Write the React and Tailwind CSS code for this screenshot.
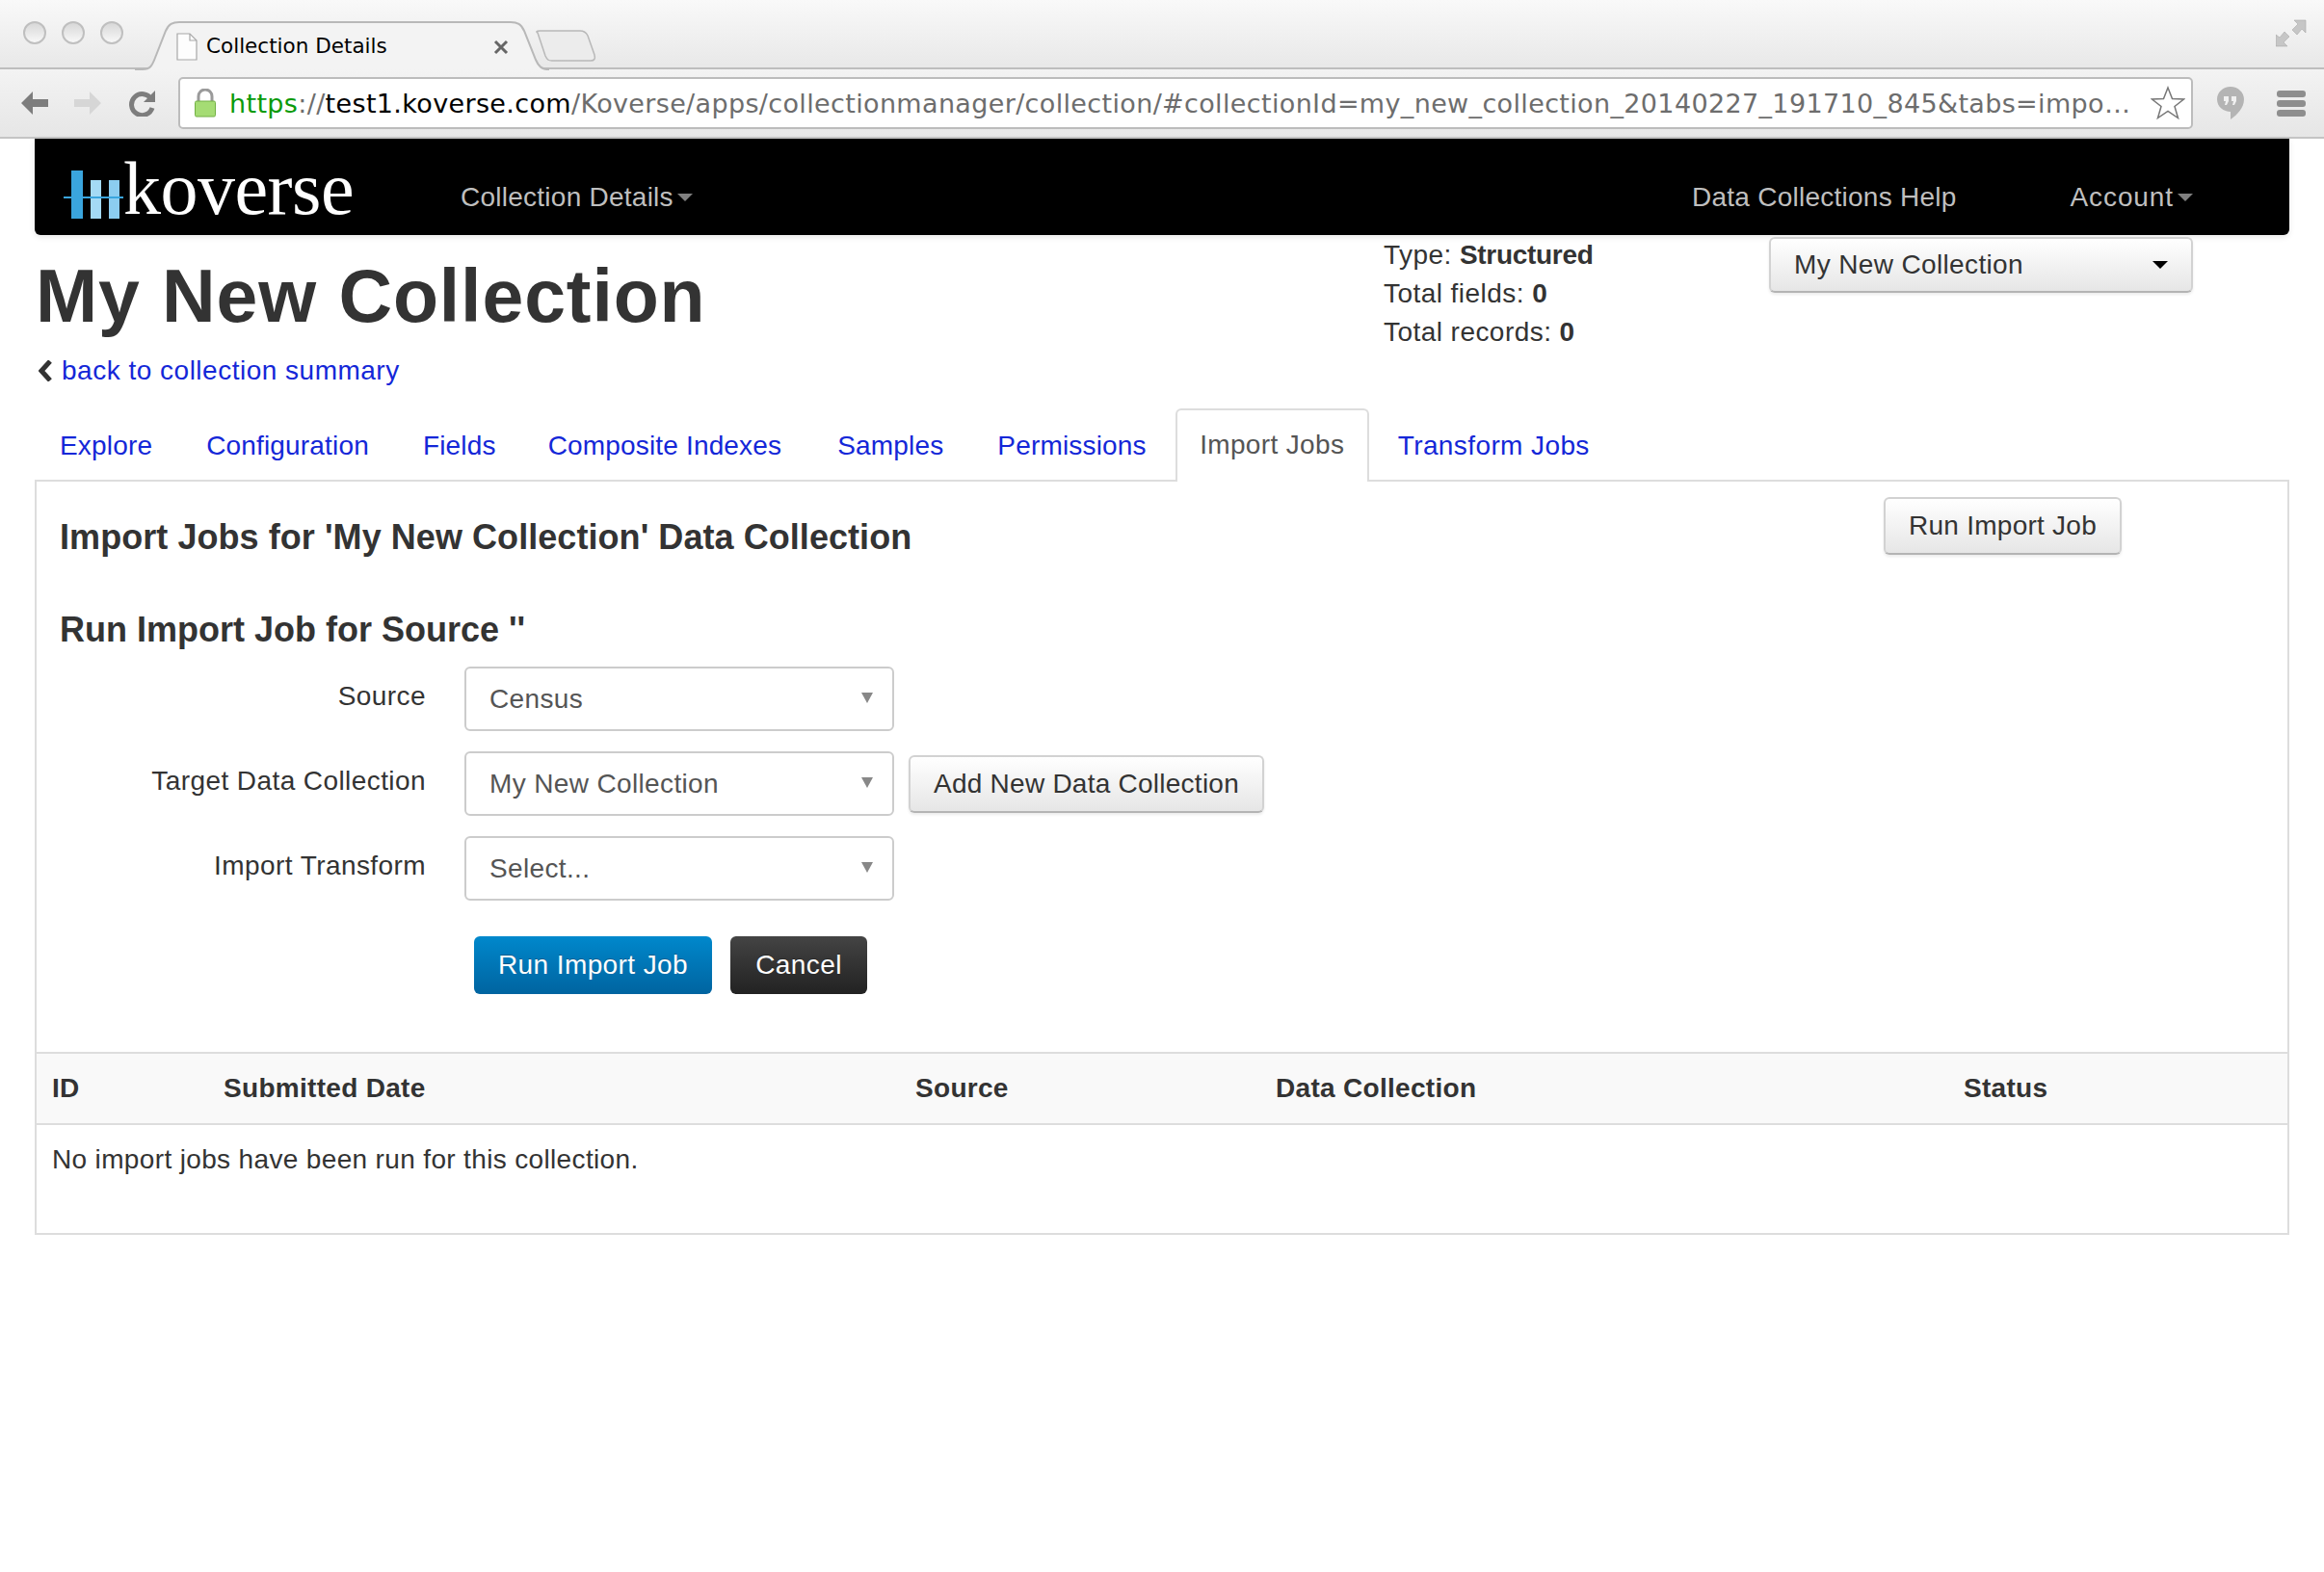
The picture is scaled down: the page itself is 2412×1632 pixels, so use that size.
import React from 'react'

const sans = 'font-["Liberation_Sans",Arial,sans-serif]'

function Caret({ className = 'border-t-[#808080]' }) {
  return <span className={`inline-block ml-[4px] w-0 h-0 border-x-[8px] border-x-transparent border-t-[8px] ${className}`} />
}

function BrowserChrome() {
  return (
    <div className='font-["DejaVu_Sans",sans-serif]'>
      <div className="relative h-[72px] bg-gradient-to-b from-[#f9f9f9] to-[#e8e8e8] border-b-2 border-[#bdbdbd] flex items-center">
        <div className="flex gap-[16px] pl-[24px] pb-[2px]">
          <span className="w-[24px] h-[24px] rounded-full border-2 border-[#bfbfbf] bg-gradient-to-b from-[#d8d8d8] to-[#f8f8f8]" />
          <span className="w-[24px] h-[24px] rounded-full border-2 border-[#bfbfbf] bg-gradient-to-b from-[#d8d8d8] to-[#f8f8f8]" />
          <span className="w-[24px] h-[24px] rounded-full border-2 border-[#bfbfbf] bg-gradient-to-b from-[#d8d8d8] to-[#f8f8f8]" />
        </div>
        <svg className="absolute left-[140px] top-[20px]" width="490" height="54" viewBox="0 0 490 54">
          <path d="M0 52 H8 C16 52 18 48 21 40 L32 12 C35 5 39 3 46 3 H390 C397 3 401 5 404 12 L416 42 C419 49 422 52 430 52" fill="#f3f3f3" stroke="#b8b8b8" strokeWidth="2" />
          <path d="M418 14 C416 13 417 12 420 12 H462 C466 12 468 13 470 17 L477 37 C478 41 477 43 473 43 H433 C429 43 428 42 426 38 Z" fill="#ececec" stroke="#b8b8b8" strokeWidth="1.5" />
        </svg>
        <svg className="absolute left-[183px] top-[34px]" width="22" height="29" viewBox="0 0 22 29">
          <path d="M1 1 H14 L21 8 V28 H1 Z" fill="#fdfdfd" stroke="#a8a8a8" strokeWidth="1.2" />
          <path d="M14 1 V8 H21" fill="none" stroke="#a8a8a8" strokeWidth="1.2" />
        </svg>
        <span className="absolute left-[214px] top-[34px] text-[21.5px] leading-[28px] text-black">Collection Details</span>
        <svg className="absolute left-[512px] top-[41px]" width="16" height="16" viewBox="0 0 16 16">
          <path d="M2 2 L14 14 M14 2 L2 14" stroke="#666" strokeWidth="3" />
        </svg>
        <svg className="ml-auto mr-[18px]" width="32" height="30" viewBox="0 0 32 30">
          <path d="M0 16 L0 28 L12 28 L8 24 L14 18 L9 13 L4 19 Z M31 1 L19 1 L23 5 L17 11 L22 16 L27 10 L31 14 Z" fill="#c6c6c6" stroke="#aaa" strokeWidth="0.6" />
        </svg>
      </div>
      <div className="h-[72px] bg-gradient-to-b from-[#f3f3f3] to-[#e6e6e6] border-b-2 border-[#c4c4c4] flex items-center">
        <div className="w-[185px] shrink-0 flex items-center pl-[20px]">
          <svg width="32" height="28" viewBox="0 0 32 28">
            <path d="M14 2 L2 14 L14 26 L14 18 L30 18 L30 10 L14 10 Z" fill="#7d7d7d" />
          </svg>
          <svg className="ml-[23px]" width="32" height="28" viewBox="0 0 32 28">
            <path d="M18 2 L30 14 L18 26 L18 18 L2 18 L2 10 L18 10 Z" fill="#d6d6d6" />
          </svg>
          <svg className="ml-[27px]" width="28" height="28" viewBox="0 0 28 28">
            <path d="M23 10 A11 11 0 1 0 24 19" fill="none" stroke="#7d7d7d" strokeWidth="5" />
            <path d="M27 1 V13 H15 Z" fill="#7d7d7d" />
          </svg>
        </div>
        <div className="w-[2091px] h-[54px] bg-white border-2 border-[#bcbcbc] rounded-[5px] flex items-center pl-[14px] pr-[6px]">
          <svg className="shrink-0" width="24" height="30" viewBox="0 0 24 30">
            <path d="M5 14 V8 A7 7 0 0 1 19 8 V14" fill="none" stroke="#9a9a9a" strokeWidth="3" />
            <rect x="1.5" y="13" width="21" height="16" rx="1.5" fill="#a5dc74" stroke="#72b044" />
          </svg>
          <span className="ml-[13px] pt-[2px] w-[1985px] shrink-0 whitespace-nowrap overflow-hidden text-[27px] leading-[36px] text-[#6d6d6d] tracking-[0.35px]">
            <span className="text-[#0a9a0a]">https</span>://<span className="text-black">test1.koverse.com</span>/Koverse/apps/collectionmanager/collection/#collectionId=my_new_collection_20140227_191710_845&amp;tabs=impo…
          </span>
          <svg className="ml-auto shrink-0" width="36" height="36" viewBox="0 0 36 36">
            <path d="M18 2 L22.5 13.5 L34.5 14 L25 21.5 L28.5 33.5 L18 26.5 L7.5 33.5 L11 21.5 L1.5 14 L13.5 13.5 Z" fill="#fff" stroke="#777" strokeWidth="1.5" />
          </svg>
        </div>
        <svg className="ml-[24px] shrink-0" width="30" height="36" viewBox="0 0 30 36">
          <path d="M15 1 C7 1 1 7 1 14 C1 22 8 27 15 27 V35 C22 30 29 23 29 14 C29 7 23 1 15 1 Z" fill="#b4b4b4" />
          <path d="M8 11 H13 V16 L11 20 H9 L10 16 H8 Z M16 11 H21 V16 L19 20 H17 L18 16 H16 Z" fill="#f0f0f0" />
        </svg>
        <div className="ml-[33px] flex flex-col gap-[3px] shrink-0">
          <span className="w-[30px] h-[7px] rounded-[3px] bg-[#8e8e8e]" />
          <span className="w-[30px] h-[7px] rounded-[3px] bg-[#8e8e8e]" />
          <span className="w-[30px] h-[7px] rounded-[3px] bg-[#8e8e8e]" />
        </div>
      </div>
    </div>
  )
}

function Navbar() {
  return (
    <div className="mx-[36px] h-[100px] pt-[22px] bg-black rounded-b-[6px] flex items-center text-[28px] tracking-[0.25px] text-[#bfbfbf] shadow-[0_2px_6px_rgba(0,0,0,0.1)]">
      <div className="ml-[30px] w-[412px] mb-[12px] flex items-center">
        <svg className="shrink-0" width="62" height="60" viewBox="0 0 62 60">
          <rect x="8" y="8" width="12" height="50" fill="#3aa5de" />
          <rect x="28" y="18" width="11" height="40" fill="#a4daf5" />
          <rect x="47" y="18" width="11" height="40" fill="#8ccdf0" />
          <rect x="0" y="35" width="62" height="2" fill="#3aa5de" />
        </svg>
        <span className='font-["Liberation_Serif",serif] text-[78px] leading-[78px] text-white -mt-[6px] tracking-[-0.5px]'>koverse</span>
      </div>
      <span className="flex items-center">Collection Details<Caret /></span>
      <span className="ml-auto">Data Collections Help</span>
      <span className="ml-[118px] mr-[100px] flex items-center tracking-[0.9px]">Account<Caret /></span>
    </div>
  )
}

function Header() {
  return (
    <div className="mx-[36px] h-[182px] flex">
      <div className="w-[1400px] shrink-0">
        <h1 className="text-[77px] leading-[80px] font-bold text-[#333] mt-[23px] ml-[1px] tracking-[0.9px]">My New Collection</h1>
        <a className="mt-[18px] ml-[4px] flex items-center text-[28px] leading-[40px] text-[#1427d8] tracking-[0.5px]">
          <svg className="mr-[8px]" width="16" height="22" viewBox="0 0 16 22">
            <path d="M12 1 L3 11 L12 21" fill="none" stroke="#333" strokeWidth="5" />
          </svg>
          back to collection summary
        </a>
      </div>
      <div className="w-[400px] pt-[1px] text-[28px] leading-[40px] text-[#333] tracking-[0.45px]">
        <div>Type: <b className="tracking-[-0.3px]">Structured</b></div>
        <div>Total fields: <b>0</b></div>
        <div>Total records: <b>0</b></div>
      </div>
      <div className="mt-[2px] w-[440px] h-[58px] border-2 border-[#d2d2d2] border-b-[#b4b4b4] rounded-[6px] bg-gradient-to-b from-white to-[#e6e6e6] flex items-center justify-between pl-[24px] pr-[24px] text-[28px] tracking-[0.36px] text-[#333] shadow-[0_2px_3px_rgba(0,0,0,0.08)]">
        My New Collection
        <span className="w-0 h-0 border-x-[8px] border-x-transparent border-t-[8px] border-t-black" />
      </div>
    </div>
  )
}

function Tabs() {
  const before = [['Explore', 'ml-[26px]'], ['Configuration', 'ml-[56px]'], ['Fields', 'ml-[56px]'], ['Composite Indexes', 'ml-[54px]'], ['Samples', 'ml-[58px]'], ['Permissions', 'ml-[56px]']]
  return (
    <div className="mx-[36px] h-[74px] flex items-end text-[28px] tracking-[0.17px] border-b-2 border-[#ddd]">
      {before.map(([t, m]) => (
        <a key={t} className={`${m} h-[74px] pt-[3px] flex items-center text-[#1427d8]`}>{t}</a>
      ))}
      <div className="ml-[30px] w-[201px] h-[76px] pb-[3px] -mb-[2px] flex items-center justify-center bg-white border-2 border-[#ddd] border-b-0 rounded-t-[6px] text-[#555] tracking-[0.35px]">Import Jobs</div>
      <a className="ml-[30px] h-[74px] pt-[3px] flex items-center text-[#1427d8] tracking-[0.4px]">Transform Jobs</a>
    </div>
  )
}

function GrayButton({ children, className = '' }) {
  return (
    <div className={`h-[60px] px-[24px] flex items-center border-2 border-[#d2d2d2] border-b-[#b4b4b4] rounded-[6px] bg-gradient-to-b from-white to-[#e6e6e6] text-[28px] tracking-[0.25px] text-[#333] whitespace-nowrap shadow-[0_2px_3px_rgba(0,0,0,0.08)] ${className}`}>
      {children}
    </div>
  )
}

function SelectRow({ label, value, children }) {
  return (
    <div className="h-[67px] flex items-center">
      <label className="w-[404px] text-right text-[28px] tracking-[0.42px] text-[#333] -mt-[6px]">{label}</label>
      <div className="ml-[40px] w-[446px] h-[67px] border-2 border-[#ccc] rounded-[6px] bg-white flex items-center justify-between pl-[24px] pr-[20px] text-[28px] tracking-[0.36px] text-[#555]">
        {value}
        <span className="w-0 h-0 border-x-[6px] border-x-transparent border-t-[11px] border-t-[#888] -mt-[2px]" />
      </div>
      {children}
    </div>
  )
}

function Panel() {
  return (
    <div className="mx-[36px] h-[782px] border-2 border-t-0 border-[#ddd]">
      <div className="flex items-start">
        <h3 className="ml-[24px] mt-[35px] text-[36px] leading-[46px] font-bold text-[#333] tracking-[0.06px]">Import Jobs for 'My New Collection' Data Collection</h3>
        <GrayButton className="ml-auto mr-[172px] mt-[16px] tracking-[0.4px]">Run Import Job</GrayButton>
      </div>
      <h3 className="ml-[24px] mt-[50px] text-[36px] leading-[46px] font-bold text-[#333]">Run Import Job for Source ''</h3>
      <div className="mt-[15px] flex flex-col gap-[21px]">
        <SelectRow label="Source" value="Census" />
        <SelectRow label="Target Data Collection" value="My New Collection">
          <GrayButton className="ml-[15px]">Add New Data Collection</GrayButton>
        </SelectRow>
        <SelectRow label="Import Transform" value="Select..." />
      </div>
      <div className="mt-[37px] ml-[454px] flex gap-[19px] text-[28px] tracking-[0.4px] text-white">
        <div className="w-[247px] h-[60px] flex items-center justify-center rounded-[6px] bg-gradient-to-b from-[#0088cc] to-[#0064a0] [text-shadow:0_-1px_0_rgba(0,0,0,0.25)]">Run Import Job</div>
        <div className="w-[142px] h-[60px] flex items-center justify-center rounded-[6px] bg-gradient-to-b from-[#444] to-[#222] [text-shadow:0_-1px_0_rgba(0,0,0,0.25)]">Cancel</div>
      </div>
      <div className="mt-[60px] h-[76px] bg-[#f9f9f9] border-y-2 border-[#ddd] grid grid-cols-[178px_718px_374px_714px_1fr] pl-[16px] items-center text-[28px] tracking-[0.3px] font-bold text-[#333]">
        <span>ID</span>
        <span>Submitted Date</span>
        <span>Source</span>
        <span>Data Collection</span>
        <span>Status</span>
      </div>
      <div className="pl-[16px] pt-[16px] text-[28px] leading-[40px] tracking-[0.35px] text-[#333]">No import jobs have been run for this collection.</div>
    </div>
  )
}

export default function App() {
  return (
    <div className={`w-[2412px] h-[1632px] bg-white overflow-hidden ${sans}`}>
      <BrowserChrome />
      <Navbar />
      <Header />
      <Tabs />
      <Panel />
    </div>
  )
}
